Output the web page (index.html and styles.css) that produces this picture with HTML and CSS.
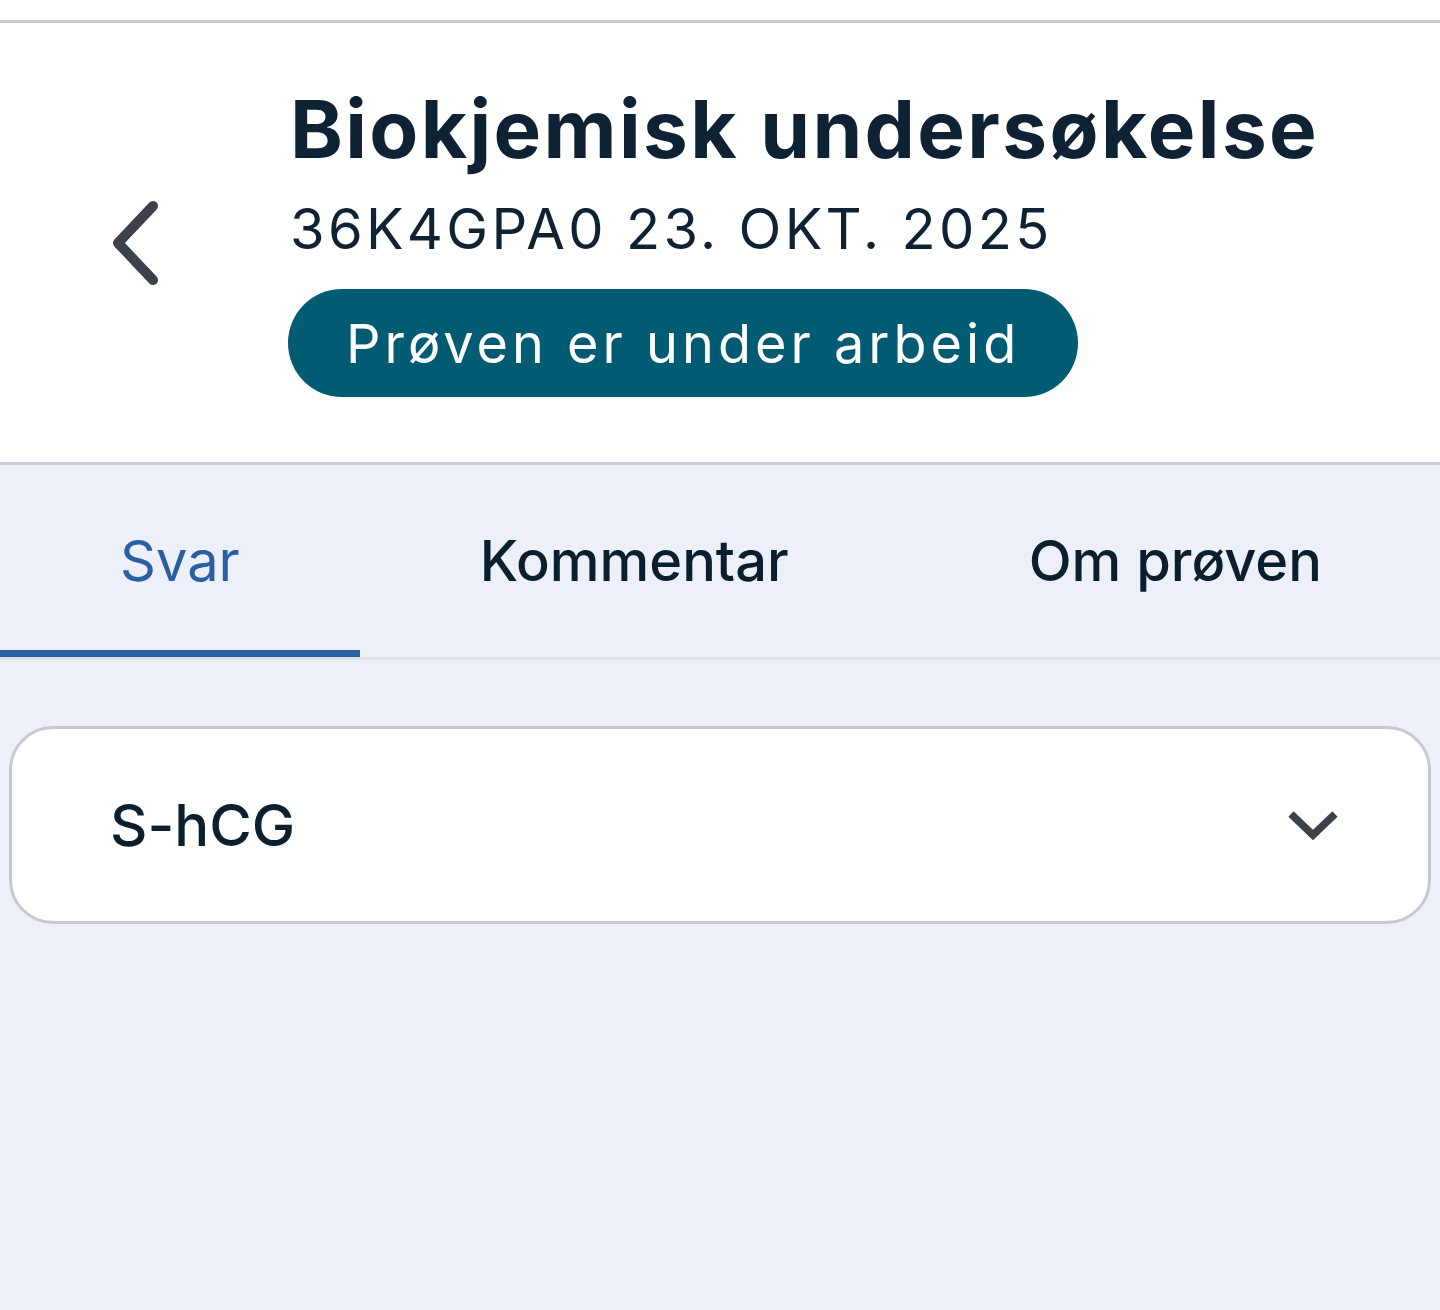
FILE: index.html
```html
<!DOCTYPE html>
<html lang="no">
<head>
<meta charset="utf-8">
<title>Biokjemisk undersøkelse</title>
<link rel="stylesheet" href="styles.css">
</head>
<body>
<div class="statusbar"></div>
<header class="header">
  <button class="back" aria-label="Tilbake">
    <svg width="60" height="94" viewBox="0 0 60 94"><path d="M45 10 L10 47 L45 84" fill="none" stroke="#3d4149" stroke-width="10" stroke-linecap="round" stroke-linejoin="round"/></svg>
  </button>
  <div class="info">
    <h1 class="title">Biokjemisk undersøkelse</h1>
    <div class="sub">36K4GPA0 23. OKT. 2025</div>
    <div class="badge">Prøven er under arbeid</div>
  </div>
</header>
<main class="main">
  <nav class="tabs">
    <div class="tab active">Svar</div>
    <div class="tab">Kommentar</div>
    <div class="tab">Om prøven</div>
  </nav>
  <section class="content">
    <div class="card">
      <span class="card-label">S-hCG</span>
      <svg class="chev" width="50" height="34" viewBox="0 0 50 34"><path d="M3 6 L25 27 L47 6" fill="none" stroke="#3d4149" stroke-width="7.5"/></svg>
    </div>
  </section>
</main>
</body>
</html>
```
FILE: styles.css
```css
* { box-sizing: border-box; }
html, body { margin: 0; padding: 0; }
body {
  width: 1440px;
  height: 1310px;
  background: #edf0f9;
  font-family: Inter, "Noto Sans", sans-serif;
  color: #0d1f2d;
  overflow: hidden;
}
.statusbar {
  height: 23px;
  background: #fff;
  border-bottom: 3px solid #c9cbd2;
}
.header {
  height: 442px;
  background: #fff;
  border-bottom: 3px solid #c9cbd2;
  display: flex;
  align-items: center;
  padding-left: 108px;
}
.back {
  width: 182px;
  padding: 0;
  border: 0;
  background: none;
  display: flex;
  align-items: center;
}
.info {
  align-self: flex-start;
  margin-top: 61px;
  display: flex;
  flex-direction: column;
  align-items: flex-start;
}
.title {
  margin: 0;
  font-size: 80px;
  line-height: 90px;
  font-weight: 700;
  letter-spacing: 2.36px;
  color: #0f2233;
}
.sub {
  font-size: 56px;
  line-height: 72px;
  letter-spacing: 3.3px;
  color: #0f2233;
  margin-top: 19px;
}
.badge {
  margin-top: 24px;
  margin-left: -2px;
  height: 108px;
  padding: 0 58px;
  border-radius: 54px;
  background: #005b73;
  color: #fff;
  font-size: 54px;
  letter-spacing: 4px;
  display: flex;
  align-items: center;
}
.tabs {
  display: flex;
  border-bottom: 3px solid #dde1ea;
  height: 195px;
  overflow: hidden;
}
.tab {
  flex-shrink: 0;
  white-space: nowrap;
  padding: 0 120px;
  font-size: 56px;
  display: flex;
  align-items: center;
  color: #0a1f2e;
  font-weight: 500;
  border-bottom: 7px solid transparent;
  padding-top: 7px;
}
.tab.active {
  color: #2a5fa3;
  font-weight: 400;
  border-bottom-color: #2a5fa3;
}
.content {
  padding: 66px 9px 0;
}
.card {
  height: 198px;
  background: #fff;
  border: 3px solid #c7c9d0;
  border-radius: 44px;
  display: flex;
  align-items: center;
  justify-content: space-between;
  padding: 0 90px 0 98px;
}
.card-label {
  font-size: 58px;
  font-weight: 500;
  color: #0d1f2d;
}
```
